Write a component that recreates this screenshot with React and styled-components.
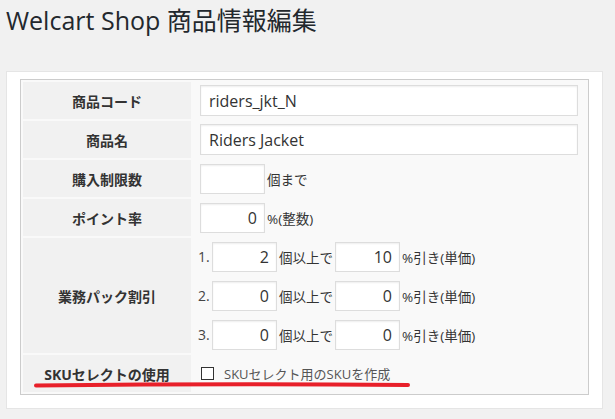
import React from "react";
import styled, { createGlobalStyle } from "styled-components";

const GlobalStyle = createGlobalStyle`
  html, body {
    margin: 0;
    padding: 0;
    background: #f1f1f1;
  }
  body {
    font-family: "Open Sans", "Noto Sans CJK JP", sans-serif;
    color: #333;
  }
`;

const Page = styled.div`
  position: relative;
  width: 615px;
  height: 419px;
  overflow: hidden;
  box-sizing: border-box;
  padding: 3px 0 0 6px;
`;

const Title = styled.h1`
  margin: 0;
  height: 35px;
  font-size: 25px;
  line-height: 35px;
  font-weight: 400;
  color: #23282d;
  white-space: nowrap;
`;

const Panel = styled.div`
  width: 597px;
  box-sizing: border-box;
  margin-top: 33px;
  padding: 7px 13px 13px;
  background: #fff;
  border: 1px solid #e5e5e5;
`;

const Table = styled.table`
  width: 100%;
  table-layout: fixed;
  border-collapse: separate;
  border-spacing: 2px;
  border: 1px solid #ccc;
  background: #f9f9f9;
`;

const Label = styled.th`
  width: 168px;
  height: ${(p) => p.$h || 37}px;
  padding: 0;
  background: #f1f1f1;
  font-size: 14px;
  font-weight: 700;
  color: #333;
  text-align: center;
  vertical-align: middle;
  white-space: nowrap;
`;

const Cell = styled.td`
  padding: 0 8px 0 7px;
  vertical-align: middle;
  font-size: 13.5px;
  color: #333;
`;

const Line = styled.div`
  display: flex;
  align-items: center;
  gap: 2px;
  white-space: nowrap;
  & + & {
    margin-top: 9px;
  }
`;

const Field = styled.input`
  box-sizing: border-box;
  width: ${(p) => p.$w}px;
  height: ${(p) => p.$h || 30}px;
  margin: 0;
  padding: 0 ${(p) => (p.$right ? 7 : 8)}px;
  border: 1px solid #ddd;
  background: #fff;
  box-shadow: inset 0 1px 2px rgba(0, 0, 0, 0.07);
  font-family: "Open Sans", "Noto Sans CJK JP", sans-serif;
  font-size: 16px;
  color: #333;
  text-align: ${(p) => (p.$right ? "right" : "left")};
  outline: none;
`;

const Num = styled.span`
  width: 12px;
  font-size: 14px;
  color: #444;
`;

const Discount = styled.div`
  margin-left: -2px;
  padding: 3px 0;
`;

const Check = styled.label`
  display: flex;
  align-items: center;
  gap: 10px;
  margin-left: 1px;
  color: #555;
  font-size: 13px;
`;

const Box = styled.span`
  width: 13px;
  height: 13px;
  box-sizing: border-box;
  border: 1px solid #333;
  background: #fff;
`;

const Mark = styled.svg`
  position: absolute;
  left: 34px;
  top: 380px;
  pointer-events: none;
`;

const discounts = [
  ["1.", "2", "10"],
  ["2.", "0", "0"],
  ["3.", "0", "0"],
];

export default function App() {
  return (
    <>
      <GlobalStyle />
      <Page>
        <Title>Welcart Shop 商品情報編集</Title>
        <Panel>
          <Table>
            <tbody>
              <tr>
                <Label>商品コード</Label>
                <Cell>
                  <Field $w={378} $h={31} defaultValue="riders_jkt_N" readOnly />
                </Cell>
              </tr>
              <tr>
                <Label>商品名</Label>
                <Cell>
                  <Field $w={378} $h={31} defaultValue="Riders Jacket" readOnly />
                </Cell>
              </tr>
              <tr>
                <Label>購入制限数</Label>
                <Cell>
                  <Line>
                    <Field $w={65} $right defaultValue="" readOnly />
                    <span>個まで</span>
                  </Line>
                </Cell>
              </tr>
              <tr>
                <Label>ポイント率</Label>
                <Cell>
                  <Line>
                    <Field $w={65} $right defaultValue="0" readOnly />
                    <span>%(整数)</span>
                  </Line>
                </Cell>
              </tr>
              <tr>
                <Label $h={115}>業務パック割引</Label>
                <Cell>
                  <Discount>
                    {discounts.map(([n, qty, rate]) => (
                      <Line key={n}>
                        <Num>{n}</Num>
                        <Field $w={65} $right defaultValue={qty} readOnly />
                        <span>個以上で</span>
                        <Field $w={65} $right defaultValue={rate} readOnly />
                        <span>%引き(単価)</span>
                      </Line>
                    ))}
                  </Discount>
                </Cell>
              </tr>
              <tr>
                <Label>SKUセレクトの使用</Label>
                <Cell>
                  <Check>
                    <Box />
                    <span>SKUセレクト用のSKUを作成</span>
                  </Check>
                </Cell>
              </tr>
            </tbody>
          </Table>
        </Panel>
        <Mark width="378" height="10" viewBox="0 0 378 10">
          <path
            d="M2 5.5 Q 190 3.5 374 5"
            stroke="#e8202a"
            strokeWidth="4"
            strokeLinecap="round"
            fill="none"
          />
        </Mark>
      </Page>
    </>
  );
}
